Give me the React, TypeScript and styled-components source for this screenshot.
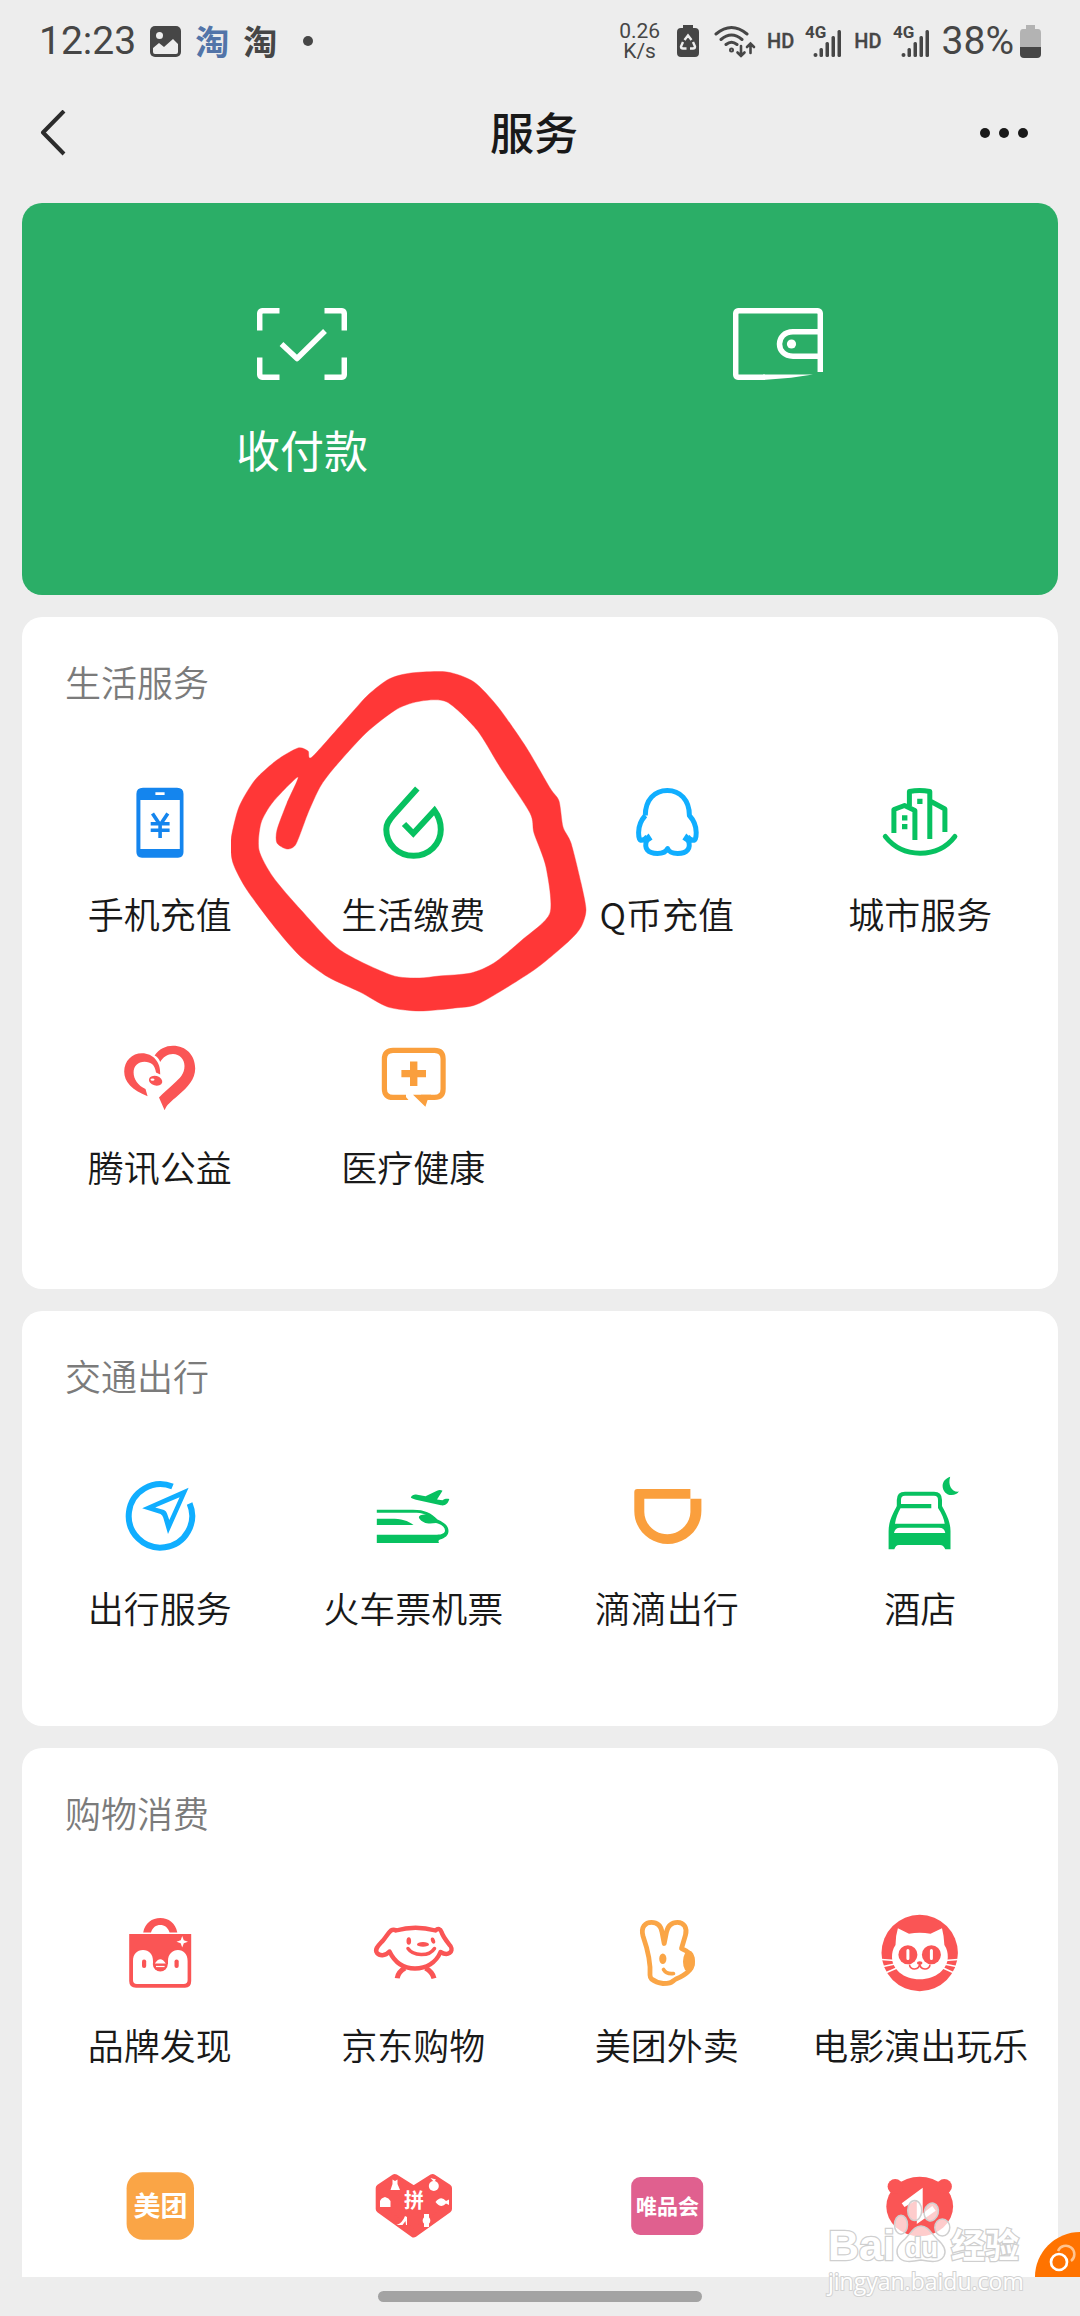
import React from "react";
import styled, { createGlobalStyle } from "styled-components";

const GREEN = "#07c160";
const RED = "#fa5555";
const BLUE = "#10aeff";
const ORANGE = "#fa9f3d";
const INK = "#464646";

const GlobalStyle = createGlobalStyle`
  * { box-sizing: border-box; }
  body {
    margin: 0;
    background: #ededed;
    color: #191919;
    font-family: Roboto, "Noto Sans CJK SC", sans-serif;
  }
  button { border: 0; padding: 0; background: none; color: inherit; font: inherit; cursor: pointer; }
  svg { display: block; flex: none; }
`;

const Screen = styled.div`
  position: relative;
  display: flex;
  flex-direction: column;
  height: 100vh;
  overflow: hidden;
`;

const StatusBar = styled.header`
  display: flex;
  align-items: center;
  justify-content: space-between;
  height: 82px;
  padding: 0 39px;
  color: ${INK};
`;

const StatusGroup = styled.div<{ $gap: number }>`
  display: flex;
  align-items: center;
  gap: ${(p) => p.$gap}px;
`;

const StatusText = styled.span`
  font-size: 39px;
  line-height: 48px;
`;

const AppMark = styled.span<{ $color: string }>`
  font-family: "Noto Sans CJK SC", sans-serif;
  font-size: 34px;
  line-height: 40px;
  font-weight: 700;
  color: ${(p) => p.$color};
`;

const Speed = styled.span`
  font-size: 21px;
  line-height: 20px;
  text-align: center;
  white-space: pre-line;
`;

const HdText = styled.span`
  font-size: 20px;
  line-height: 24px;
  font-weight: 500;
  -webkit-text-stroke: 0.3px currentColor;
`;

const NavBar = styled.nav`
  display: grid;
  grid-template-columns: 1fr auto 1fr;
  align-items: center;
  height: 104px;
  padding: 2px 52px 0 40px;
`;

const NavButton = styled.button<{ $end?: boolean }>`
  justify-self: ${(p) => (p.$end ? "end" : "start")};
`;

const NavTitle = styled.h1`
  margin: 0;
  font-size: 44px;
  line-height: 64px;
  font-weight: 500;
`;

const Content = styled.main`
  flex: 1;
  min-height: 0;
  display: flex;
  flex-direction: column;
  gap: 22px;
  padding: 17px 22px 0;
  overflow-y: auto;
  scrollbar-width: none;
`;

const PayCard = styled.section`
  display: grid;
  grid-template-columns: 1fr 1fr;
  flex: none;
  padding: 105px 42px 110px;
  border-radius: 20px;
  background: #2bae67;
  color: #fff;
`;

const PayButton = styled.button`
  display: flex;
  flex-direction: column;
  align-items: center;
  gap: 41px;
  min-height: 177px;
  font-size: 44px;
  line-height: 64px;
`;

const Card = styled.section<{ $roomy: boolean }>`
  flex: none;
  padding: 43px 11px ${(p) => (p.$roomy ? 49 : 45)}px;
  border-radius: 20px;
  background: #fff;
`;

const CardTitle = styled.h2`
  margin: 0 0 24px;
  padding-left: 32px;
  font-size: 36px;
  line-height: 50px;
  font-weight: 350;
  color: #7b7b7b;
`;

const Grid = styled.div`
  display: grid;
  grid-template-columns: repeat(4, 1fr);
`;

const Tile = styled.button`
  position: relative;
  display: flex;
  flex-direction: column;
  align-items: center;
  gap: 24px;
  min-height: 253px;
  padding: 46px 0 49px;
  font-family: "Noto Sans CJK SC", sans-serif;
  font-size: 36px;
  line-height: 50px;
  font-weight: 350;
  white-space: nowrap;
`;

const Scribble = styled.svg`
  position: absolute;
  top: -64px;
  left: 50%;
  margin-left: -182px;
  z-index: 1;
  pointer-events: none;
`;

const HomeArea = styled.footer`
  display: flex;
  justify-content: center;
  flex: none;
  height: 39px;
  padding-top: 14px;
`;

const HomeBar = styled.div`
  width: 30%;
  height: 11px;
  border-radius: 6px;
  background: #a3a3a3;
`;

const FloatButton = styled.button`
  position: absolute;
  right: 0;
  bottom: 39px;
  width: 45px;
  height: 45px;
  border-top-left-radius: 45px;
  background: #ff7300;
  overflow: hidden;
`;

const Watermark = styled.div`
  position: absolute;
  right: 56px;
  bottom: 20px;
  width: 196px;
  pointer-events: none;
`;

const WatermarkUrl = styled.div`
  margin-top: -4px;
  font-family: "Open Sans", "Noto Sans", sans-serif;
  font-size: 23px;
  line-height: 30px;
  color: #fff;
  -webkit-text-stroke: 2px #d2d2d2;
  paint-order: stroke fill;
`;

const Icon = ({ children }: { children: React.ReactNode }) => (
  <svg width="84" height="84" viewBox="0 0 84 84" fill="none" aria-hidden="true">
    {children}
  </svg>
);

const PhoneIcon = () => (
  <Icon>
    <path
      fill="#1485ee"
      fillRule="evenodd"
      d="M25 7.7H59Q65.5 7.7 65.5 14V72Q65.5 77.7 60 77.7H24Q18.4 77.7 18.4 72V14Q18.4 7.7 25 7.7ZM22.4 20V69H61.8V20ZM37.4 12.3V15H46.6V12.3Z"
    />
    <path stroke="#1485ee" strokeWidth="3.6" d="M34.5 33.5L42.1 45L49.8 33.5M32.7 43.8H51.6M32.7 50.2H51.6M42.1 43V58" />
  </Icon>
);

const DropIcon = () => (
  <Icon>
    <path
      stroke={GREEN}
      strokeWidth="6"
      d="M46.3 8.5L23 34.5C17.5 40.5 15.3 44 15.3 49.5C15.3 64 27 75.7 42.6 75.7C58 75.7 69.8 64 69.8 49.5C69.8 42 67.5 36 63.5 30.5L42.3 53.5L33 44"
    />
  </Icon>
);

const PenguinIcon = () => (
  <Icon>
    <path
      stroke={BLUE}
      strokeWidth="5"
      strokeLinejoin="round"
      d="M20.3 35.5C20.3 20 29.5 10.5 42.3 10.5C55 10.5 64.4 20 64.4 35.5C69 40.5 71.2 45.5 71.2 52.5C71.2 57 70.5 60 69 60.3C67 60.6 64.5 59 62.5 56.5M20.3 35.5C15.8 40.5 13.6 45.5 13.6 52.5C13.6 57 14.4 60 15.8 60.3C17.8 60.6 20.3 59 22.3 56.5M21.5 61C19 68 22.5 73.4 32.5 73.4C38.5 73.4 41.5 71 42.6 68.6C43.6 71 46.7 73.4 52.7 73.4C62.5 73.4 66 68 63.5 61"
    />
    <path fill={BLUE} d="M23.6 53.5L27.5 59.5L21 64L18 59ZM61.3 53.5L57.4 59.5L64 64L67 59Z" />
  </Icon>
);

const CityIcon = () => (
  <Icon>
    <g stroke={GREEN} strokeWidth="5">
      <path strokeLinejoin="round" d="M15.9 53V29.5L26.5 25.5L36.9 30.5V60" />
      <path strokeLinejoin="round" d="M31.4 26V11.5Q41.6 9.6 51.8 11.5V59M53 21.5L66.9 29V52" />
      <path strokeLinecap="round" d="M7.3 56.5C16 67.5 28 73.2 42.1 73.2S68.5 67.5 76.9 56.5" />
    </g>
    <path fill={GREEN} d="M39.2 18.7H44.5V24H39.2ZM24 35.3H29.4V40.5H24ZM24 44H29.4V49.2H24Z" />
  </Icon>
);

const HeartIcon = () => (
  <Icon>
    <g fill={RED}>
      <path d="M29.6 63.3C14 57 6.2 49 6.2 38.5C6.2 28 14 20.3 24 20.3C35 20.3 42.8 29 42.2 41.5L38 39.5C37 32 33 28.7 26.5 28.7C20 28.7 15.6 33 15.6 39.5C15.6 46.5 20 52.5 27.5 56Z" />
      <path d="M36.6 22.5C41 16 47.5 12.7 55 12.7C68 12.7 77.2 22 77.2 35.5C77.2 46 70 54 60 62.5C53 68.5 48.5 72 46.6 77.3L41 64.5C45 60 50 56.5 56 50.5C62 45 66.5 41 66.5 33C66.5 26 61.5 21 55 21C49.5 21 45 24 42.2 29C41 26 39 23.5 36.6 22.5Z" />
      <ellipse cx="37.6" cy="47.7" rx="6.8" ry="4.8" transform="rotate(15 37.6 47.7)" />
    </g>
    <ellipse cx="34.5" cy="46.6" rx="2" ry="1.2" fill="#fff" />
  </Icon>
);

const MedicalIcon = () => (
  <Icon>
    <path
      stroke={ORANGE}
      strokeWidth="5.2"
      d="M35 64.4H22Q13.4 64.4 13.4 56V26Q13.4 17.3 22 17.3H63.5Q72.1 17.3 72.1 26V56Q72.1 64.4 63.5 64.4H50"
    />
    <path fill={ORANGE} d="M33 61.8L37.5 67H33ZM42 61.8H60V67H56.6L54.4 73.8ZM39 28.4H46.4V37H55V44.3H46.4V53H39V44.3H30.4V37H39Z" />
  </Icon>
);

const CompassIcon = () => (
  <Icon>
    <path stroke={BLUE} strokeWidth="6" d="M54.5 12.6A31.7 31.7 0 1 0 71.6 29.5" />
    <path
      fill={BLUE}
      fillRule="evenodd"
      d="M70.6 13.7L24.2 34.3L42.5 40Q44.5 41 45.2 43.5L50 60ZM61.6 23.3L37.2 33.5L46 36Q48.5 37 49 39.5L51.3 46Z"
    />
  </Icon>
);

const TrainIcon = () => (
  <Icon>
    <g fill={GREEN}>
      <path d="M39.8 23.5C41 21 43 20.3 45 20.5L54.5 22.3L66 16.8C68 15.8 70 16 71.5 16.8L66 25.5L71.5 26.3C74 24.5 76 24.6 78.3 25C77 30 74 32 70 31.3L45 25.8C43 25.2 41 24.5 39.8 23.5Z" />
      <path d="M5.8 35.7H42C54 35.7 60 39 66.5 45.5C74 49 77.5 52 77.5 57C77.5 61.5 74 64 69 65.5Q66.5 66.5 68 69H5.8V60.7H66C71 60.7 74 59 74 56.5C74 53 70 50 65 49C58 50 52 50 48 44C47.5 42 49.5 40.5 55 40.5C51 39 47 38.7 42 38.7H5.8Z" />
      <path d="M5.8 44.7H20C30 44.7 37 46.5 42.5 51H5.8Z" />
    </g>
  </Icon>
);

const DidiIcon = () => (
  <Icon>
    <path
      fill={ORANGE}
      fillRule="evenodd"
      d="M12.3 15H65.4V24.7H76.4V37C76.4 56 60 70 42.8 70C25 70 9.3 56 9.3 37V18Q9.3 15 12.3 15ZM19.3 24.7V38C19.3 50 30 60.3 42.4 60.3C54 60.3 65.4 50 65.4 38V24.7Z"
    />
  </Icon>
);

const HotelIcon = () => (
  <Icon>
    <path
      fill={GREEN}
      fillRule="evenodd"
      d="M27 17.7H56Q64 17.7 64 26V32C66 36 72.5 46 72.5 57V75.3H67.3Q65.5 71 62 71H21Q17.7 71 16.3 75.3H10.6V57C10.6 46 16 38 18.8 32V26Q18.8 17.7 27 17.7ZM27 21.8Q23 21.8 23 26V30H53.3V34.3H22.5C20 39 17.8 44 17 49.7H66.7C66 45 64 40 60 34V26Q60 21.8 56 21.8ZM16 59H67.3Q66.5 53.7 61 53.7H22Q17 53.7 16 59Z"
    />
    <path fill={GREEN} d="M72.2 2.7C67 4.5 64.6 8 64.6 12C64.6 17 68.5 21.1 73.5 21.1C77 21.1 79.6 19.8 80.8 17.6C74 18.5 69.5 11 72.2 2.7Z" />
  </Icon>
);

const BagIcon = () => (
  <Icon>
    <g fill={RED}>
      <path d="M25.2 21.4C27 12 34 7 42.3 7S57.5 12 59.3 21.4H51.6C50 16.5 46.5 14 42.3 14S34.5 16.5 33 21.4Z" />
      <path
        fillRule="evenodd"
        d="M11.2 23H73.2V70Q73.2 76.7 67 76.7H18Q11.2 76.7 11.2 70ZM15 50V69Q15 73 19 73H65.6Q69.6 73 69.6 69V50C69.6 43 65.5 39 60 39S50 43 50 50V53H35V50C35 43 31 39 25 39S15 43 15 50Z"
      />
      <circle cx="42.3" cy="53" r="7.5" />
      <rect x="24" y="48.5" width="4.2" height="8.5" rx="2" />
      <rect x="56.5" y="48.5" width="4.2" height="8.5" rx="2" />
    </g>
    <path fill="#fff" d="M64.2 25L65.8 29.2L70 30.7L65.8 32.3L64.2 36.5L62.7 32.3L58.5 30.7L62.7 29.2ZM36.8 52.6Q42.3 44 47.8 52.6Z" />
    <path stroke="#fff" strokeWidth="1.2" d="M38 55.5H46.6" />
  </Icon>
);

const DogIcon = () => (
  <Icon>
    <g stroke={RED} strokeWidth="4.4" strokeLinecap="round" strokeLinejoin="round">
      <path d="M25 19.5C38 15.8 51 15.8 64.5 19.5C67 17 69.5 18 70.5 21C72 26 76 30.500 79.500 35C83 41 77 45.500 69.500 41C65 52 55 57.5 44 57.5S24 52 18.500 40.500C14 45.500 8.5 45 6 42C3 38 8 34 12 29.5C15 26 17 22 20 19.500Q22.5 18 25 19.5Z" />
      <path strokeWidth="3.5" d="M37 37.5C42 45 58 46 63.5 37.5" />
    </g>
    <path stroke={RED} strokeWidth="5" d="M34 57Q27 61 26.2 67.3M54.5 57Q61.5 61 63 67.3" />
    <g fill={RED}>
      <ellipse cx="37.8" cy="30" rx="2.3" ry="3.8" />
      <ellipse cx="62" cy="29.6" rx="2" ry="3.2" transform="rotate(-20 62 29.6)" />
      <ellipse cx="52" cy="33.4" rx="6" ry="2.3" />
    </g>
  </Icon>
);

const BunnyIcon = () => (
  <Icon>
    <path
      stroke="#faa546"
      strokeWidth="4.8"
      strokeLinejoin="round"
      d="M25 64C26 50 22.5 38 18 25C15.5 16 20.5 11.3 26.5 11.3C32.5 11.3 36 15 37 21L39.2 32.5L41.5 21C43 14 47 11.3 52.5 11.3C59 11.3 62.5 17 60.5 24L56.5 37.5C64 40.5 67.5 45 67.5 50.5C67.5 58 61 64 51 68C46 71 47 72.5 38 72.5Q31 71.5 26.5 68Q25 66.5 25 64Z"
    />
    <path stroke="#faa546" strokeWidth="3.6" strokeLinecap="round" d="M38.5 58.5Q41.5 63.5 48.5 62.5" />
    <ellipse cx="37.8" cy="47.7" rx="3.6" ry="5.3" fill="#faa546" />
    <ellipse cx="64" cy="50.5" rx="6" ry="11" fill="#faa546" />
  </Icon>
);

const CatIcon = () => (
  <Icon>
    <circle cx="41.7" cy="42" r="38.2" fill={RED} />
    <path fill="#fff" d="M19.9 17.3L31 22.8Q41.7 20.5 52.5 22.8L64 17.3Q66 25 66.4 34Q69.8 39 69.8 46C69.8 58 58 68.3 41.7 68.3S14 58 14 46Q14 39 17.5 34Q17.5 25 19.9 17.3Z" />
    <path stroke="#fff" strokeWidth="1.6" d="M3.5 48.5L17 49.5M5 55.5L17 53M8.5 61.5L20 56.5M80 48.5L67 49.5M78.5 55.5L66 53M75 61.5L64 56.5" />
    <circle cx="29.9" cy="43.7" r="9.5" fill={RED} />
    <circle cx="53.4" cy="43.7" r="9.5" fill={RED} />
    <path stroke="#fff" strokeWidth="3" strokeLinecap="round" d="M29.9 39.5V47.5M53.4 39.5V47.5" />
    <path stroke={RED} strokeWidth="1.6" d="M31.5 53.5C31.5 59.5 41.7 60 41.7 52C41.7 60 52 59.5 52 53.5" />
    <ellipse cx="41.7" cy="52" rx="2.8" ry="1.8" fill={RED} />
  </Icon>
);

const LogoText = styled.text`
  font-family: "Noto Sans CJK SC", sans-serif;
  font-weight: 700;
  text-anchor: middle;
  fill: #fff;
`;

const MeituanIcon = () => (
  <Icon>
    <rect x="8.6" y="8.3" width="67.4" height="67.4" rx="16" fill="#faa546" />
    <LogoText x="42.4" y="52" fontSize="27">美团</LogoText>
  </Icon>
);

const PinIcon = () => (
  <Icon>
    <path
      fill={RED}
      stroke={RED}
      strokeWidth="8"
      strokeLinejoin="round"
      d="M23.7 14L42.7 26L61.7 14L77 24V45L42.7 69.5L8.7 45V24Z"
    />
    <LogoText x="42.9" y="44" fontSize="20">拼</LogoText>
    <g fill="#fff">
      <path d="M21.5 15.5L24 17L26.5 15.5V20L29 26H19.5L21.5 20ZM9 42V37Q10 34 14 33Q18 34 19.5 37V43H9Z" />
      <circle cx="62.8" cy="22" r="5" />
      <path d="M59.5 14L65 15.5L63 18ZM64.5 38Q70 31 75 37L78 35.5V41L75 39.5Q70 45 64.5 38Z" />
      <path d="M25.5 61Q31.5 59 34 52L36 53V61H35L34.5 57L31.5 61Z" />
      <circle cx="55.5" cy="56.5" r="3.8" />
      <path d="M53 50H58V63H53Z" />
    </g>
  </Icon>
);

const VipIcon = () => (
  <Icon>
    <rect x="6.2" y="13" width="72" height="58" rx="9" fill="#e0608f" />
    <LogoText x="42.5" y="50" fontSize="21">唯品会</LogoText>
  </Icon>
);

const BearIcon = () => (
  <Icon>
    <g fill={RED}>
      <ellipse cx="41.7" cy="42.5" rx="33.4" ry="29.7" />
      <circle cx="17.2" cy="22.5" r="7.6" />
      <circle cx="66.3" cy="22.5" r="7.6" />
    </g>
    <path fill="#fff" d="M44.7 23.7L23.7 39.3L26.5 43L38.8 36V60L57.7 46.7L54.3 42L44.7 49.5Z" />
  </Icon>
);

type Point = [number, number];

const SCRIBBLE_OUTER: Point[] = [
  [81, 85], [117, 45], [137, 23], [158, 7], [180, 1], [216, 0], [243, 10], [267, 35], [295, 75], [319, 116],
  [328, 129], [332, 155], [340, 171], [350, 211], [355, 238], [350, 255], [338, 269], [303, 298], [249, 331],
  [224, 336], [188, 339], [157, 335], [129, 320], [97, 305], [70, 285], [46, 258], [16, 218], [2, 191],
  [0, 168], [8, 135], [24, 108], [46, 88], [67, 76], [77, 79],
];

const SCRIBBLE_INNER: Point[] = [
  [103, 96], [135, 61], [166, 37], [190, 29], [216, 30], [246, 58], [269, 95], [299, 141], [303, 161], [315, 195],
  [319, 241], [291, 268], [263, 291], [240, 301], [208, 304], [188, 306], [160, 303], [109, 278], [70, 238],
  [42, 205], [28, 178], [30, 151], [42, 130], [67, 105], [56, 131], [46, 158], [46, 171], [56, 177], [65, 172],
  [77, 141], [89, 115],
];

// Closed Catmull-Rom curve through the points, written as cubic segments.
const smooth = (points: Point[]) => {
  const n = points.length;
  const at = (i: number) => points[(i + n) % n];
  let d = `M${points[0].join(" ")}`;
  for (let i = 0; i < n; i++) {
    const [a, b, c, e] = [at(i - 1), at(i), at(i + 1), at(i + 2)];
    d += `C${b[0] + (c[0] - a[0]) / 8} ${b[1] + (c[1] - a[1]) / 8} ${c[0] - (e[0] - b[0]) / 8} ${c[1] - (e[1] - b[1]) / 8} ${c[0]} ${c[1]}`;
  }
  return d + "Z";
};

const Marker = () => (
  <Scribble width="364" height="344" viewBox="0 -2 364 344" aria-hidden="true">
    <path
      fill="#ff3737"
      stroke="#ff3737"
      strokeOpacity="0.4"
      fillRule="evenodd"
      d={smooth(SCRIBBLE_OUTER) + smooth(SCRIBBLE_INNER)}
    />
  </Scribble>
);

const SignalIcon = () => (
  <svg width="38" height="34" viewBox="0 0 38 34" fill={INK} aria-hidden="true">
    <text x="0" y="14" fontSize="17" fontWeight="700" fontFamily="Roboto, sans-serif">4G</text>
    <circle cx="10.5" cy="31" r="2" />
    <rect x="14.5" y="24" width="3.5" height="9" rx="1.5" />
    <rect x="20.5" y="18" width="3.5" height="15" rx="1.5" />
    <rect x="26.5" y="12" width="3.5" height="21" rx="1.5" />
    <rect x="32.5" y="6" width="3.5" height="27" rx="1.5" />
  </svg>
);

type Service = { name: string; icon: () => React.ReactElement; marked?: boolean; iconOnly?: boolean };

const SECTIONS: { title: string; roomy?: boolean; items: Service[] }[] = [
  {
    title: "生活服务",
    roomy: true,
    items: [
      { name: "手机充值", icon: PhoneIcon },
      { name: "生活缴费", icon: DropIcon, marked: true },
      { name: "Q币充值", icon: PenguinIcon },
      { name: "城市服务", icon: CityIcon },
      { name: "腾讯公益", icon: HeartIcon },
      { name: "医疗健康", icon: MedicalIcon },
    ],
  },
  {
    title: "交通出行",
    items: [
      { name: "出行服务", icon: CompassIcon },
      { name: "火车票机票", icon: TrainIcon },
      { name: "滴滴出行", icon: DidiIcon },
      { name: "酒店", icon: HotelIcon },
    ],
  },
  {
    title: "购物消费",
    items: [
      { name: "品牌发现", icon: BagIcon },
      { name: "京东购物", icon: DogIcon },
      { name: "美团外卖", icon: BunnyIcon },
      { name: "电影演出玩乐", icon: CatIcon },
      { name: "美团", icon: MeituanIcon, iconOnly: true },
      { name: "拼", icon: PinIcon, iconOnly: true },
      { name: "唯品会", icon: VipIcon, iconOnly: true },
      { name: "1", icon: BearIcon, iconOnly: true },
    ],
  },
];

export default function App() {
  return (
    <Screen>
      <GlobalStyle />
      <StatusBar>
        <StatusGroup $gap={14}>
          <StatusText>12:23</StatusText>
          <svg width="31" height="31" viewBox="0 0 31 31" aria-hidden="true">
            <rect width="31" height="31" rx="5" fill={INK} />
            <circle cx="9.5" cy="9.5" r="3.5" fill="#ededed" />
            <path fill="#ededed" d="M3 22L9 17L14 21L23 13L28 18V26Q28 28 26 28H5Q3 28 3 26Z" />
          </svg>
          <AppMark $color="#5274a8">淘</AppMark>
          <AppMark $color={INK}>淘</AppMark>
          <svg width="26" height="10" viewBox="0 0 26 10" aria-hidden="true">
            <circle cx="17" cy="5" r="5" fill={INK} />
          </svg>
        </StatusGroup>
        <StatusGroup $gap={11}>
          <Speed>{"0.26\nK/s"}</Speed>
          <svg width="32" height="32" viewBox="0 0 32 32" aria-hidden="true">
            <path fill={INK} d="M12 0H22V3H24Q28 3 28 7V28Q28 32 24 32H10Q6 32 6 28V7Q6 3 10 3H12Z" />
            <path stroke="#ededed" strokeWidth="2.4" fill="none" d="M13.5 15L17 10.5L20.5 15M22 17L24 21.5Q24 23.5 22 23.5H19M15.5 23.5H12Q10 23.5 10 21.5L12 17" />
          </svg>
          <svg width="42" height="33" viewBox="0 0 42 33" fill="none" stroke={INK} strokeWidth="3" strokeLinecap="round" aria-hidden="true">
            <path d="M2 9Q17.5 -4 33 9M7 14.5Q17.5 5.5 28 14.5M12 19.5Q17.5 15 23 19.5" />
            <circle cx="17.5" cy="25" r="1" />
            <path strokeWidth="2.6" d="M27 21V31M23.5 27.5L27 31L30.5 27.5M36.5 28V18.5M33 22L36.5 18.5L40 22" />
          </svg>
          <HdText>HD</HdText>
          <SignalIcon />
          <HdText>HD</HdText>
          <SignalIcon />
          <StatusGroup $gap={6}>
            <StatusText>38%</StatusText>
            <svg width="21" height="33" viewBox="0 0 21 33" aria-hidden="true">
              <path fill="#b3b3b3" d="M6 0H15V4H18Q21 4 21 8V22H0V8Q0 4 3 4H6Z" />
              <path fill={INK} d="M0 22H21V29Q21 33 17 33H4Q0 33 0 29Z" />
            </svg>
          </StatusGroup>
        </StatusGroup>
      </StatusBar>

      <NavBar>
        <NavButton aria-label="返回">
          <svg width="27" height="50" viewBox="0 0 27 50" fill="none" stroke="#2b2b2b" strokeWidth="4" aria-hidden="true">
            <path strokeLinejoin="round" d="M24 1L3 22.500L24 44" />
          </svg>
        </NavButton>
        <NavTitle>服务</NavTitle>
        <NavButton $end aria-label="更多">
          <svg width="48" height="14" viewBox="0 0 48 14" fill="#191919" aria-hidden="true">
            <circle cx="5" cy="5" r="5" />
            <circle cx="24" cy="5" r="5" />
            <circle cx="43" cy="5" r="5" />
          </svg>
        </NavButton>
      </NavBar>

      <Content>
        <PayCard>
          <PayButton>
            <svg width="90" height="72" viewBox="0 0 90 72" fill="none" stroke="#fff" strokeWidth="5.5" aria-hidden="true">
              <path d="M22.5 2.7H6Q2.7 2.7 2.7 6V22.5M67.5 2.7H84Q87.3 2.7 87.3 6V22.5M22.5 69.3H6Q2.7 69.3 2.7 66V49.5M67.5 69.3H84Q87.3 69.3 87.3 66V49.5" />
              <path strokeLinejoin="round" d="M24.5 36L40 50.5L68 23" />
            </svg>
            收付款
          </PayButton>
          <PayButton aria-label="钱包">
            <svg width="90" height="72" viewBox="0 0 90 72" fill="none" stroke="#fff" strokeWidth="5.5" aria-hidden="true">
              <path d="M87.3 64V6Q87.3 2.7 84 2.7H6Q2.7 2.7 2.7 6V66Q2.7 69.3 6 69.3H32M87.3 23.8H60C42 23.8 42 48.2 60 48.2H87.3" />
              <path fill="#fff" stroke="none" d="M30 66.6H80L58 69.8L30 72Z" />
              <circle cx="58.5" cy="36" r="4.6" fill="#fff" stroke="none" />
            </svg>
          </PayButton>
        </PayCard>

        {SECTIONS.map((section) => (
          <Card key={section.title} $roomy={!!section.roomy}>
            <CardTitle>{section.title}</CardTitle>
            <Grid>
              {section.items.map(({ name, icon: Glyph, marked, iconOnly }) => (
                <Tile key={name} aria-label={iconOnly ? name : undefined}>
                  <Glyph />
                  {!iconOnly && name}
                  {marked && <Marker />}
                </Tile>
              ))}
            </Grid>
          </Card>
        ))}
      </Content>

      <HomeArea>
        <HomeBar />
      </HomeArea>

      <FloatButton aria-label="悬浮窗">
        <svg width="45" height="45" viewBox="0 0 45 45" fill="none" aria-hidden="true">
          <path stroke="#ffc48f" strokeWidth="2.5" d="M23 19A8.5 8.5 0 1 1 36 29" />
          <circle cx="24" cy="30" r="8" stroke="#fff" strokeWidth="2.7" />
        </svg>
      </FloatButton>

      <Watermark>
        <svg width="196" height="75" viewBox="0 0 196 75" aria-hidden="true">
          <g fill="#fff" fillOpacity="0.7" stroke="#cfcfcf" strokeWidth="1.5">
            <ellipse cx="73" cy="29.7" rx="6.5" ry="9.5" />
            <ellipse cx="86.7" cy="15.5" rx="7" ry="10" />
            <ellipse cx="103.3" cy="17" rx="7" ry="9" transform="rotate(15 103.3 17)" />
            <ellipse cx="114.3" cy="32.5" rx="7.5" ry="8.5" />
            <path d="M93 31C100 31 103 38 109 44C116 50 119 55 116 61C112 68 103 67 93 65C83 67 74 68 70 61C67 54 71 49 77 44C83 38 86 31 93 31Z" />
          </g>
          <g fill="#fff" stroke="#cfcfcf" strokeWidth="2.5" paintOrder="stroke" fontWeight="700" fontFamily='"Liberation Sans", "Noto Sans CJK SC", sans-serif'>
            <text x="0" y="65" fontSize="43">Bai</text>
            <text x="77" y="62" fontSize="27">du</text>
            <text x="123" y="63" fontSize="34">经验</text>
          </g>
        </svg>
        <WatermarkUrl>jingyan.baidu.com</WatermarkUrl>
      </Watermark>
    </Screen>
  );
}
